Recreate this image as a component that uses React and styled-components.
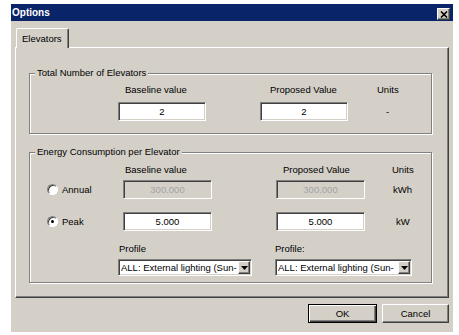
import styled, { createGlobalStyle } from 'styled-components'

const GlobalStyle = createGlobalStyle`
  html, body {
    margin: 0;
    padding: 0;
    background: #fff;
  }
  body {
    font-family: "Liberation Sans", Arial, sans-serif;
    font-size: 9.5px;
    color: #000;
  }
`

const Page = styled.div`
  padding: 4px 0 0 11px;
`

const Window = styled.div`
  width: 442px;
  height: 328px;
  background: #d4d0c8;
  display: flex;
  flex-direction: column;
`

const TitleBar = styled.div`
  height: 17px;
  flex: none;
  display: flex;
  align-items: center;
  justify-content: space-between;
  padding: 0 3px 0 1px;
  background: #0a246a;
  color: #fff;
  font-size: 10px;
  font-weight: bold;
`

const CloseButton = styled.div`
  width: 13px;
  height: 12px;
  margin-top: 3px;
  box-sizing: border-box;
  display: flex;
  align-items: center;
  justify-content: center;
  background: #d4d0c8;
  border: 1px solid;
  border-color: #fff #404040 #404040 #fff;
  box-shadow: inset -1px -1px 0 #808080;
`

const Body = styled.div`
  flex: 1;
  display: flex;
  flex-direction: column;
  padding: 7px 4px 0 4px;
`

const TabStrip = styled.div`
  display: flex;
  height: 19px;
  padding-left: 1px;
`

const Tab = styled.div`
  position: relative;
  z-index: 1;
  height: 20px;
  box-sizing: border-box;
  padding: 4px 6px 0 5px;
  background: #d4d0c8;
  border-top: 1px solid #fff;
  border-left: 1px solid #fff;
  border-right: 1px solid #404040;
  box-shadow: inset -1px 0 0 #808080;
  border-radius: 2px 2px 0 0;
  line-height: 12px;
`

const TabPanel = styled.div`
  height: 251px;
  box-sizing: border-box;
  border: 1px solid;
  border-color: #fff #404040 #404040 #fff;
  box-shadow: inset -1px -1px 0 #808080;
  padding: 25px 16px 0 13px;
  display: flex;
  flex-direction: column;
`

const Group = styled.div`
  border: 1px solid #808080;
  box-shadow: inset 1px 1px 0 #fff, 1px 1px 0 #fff;
  margin-top: ${({ $mt }) => $mt || 0}px;
  padding-bottom: ${({ $pb }) => $pb}px;
  display: flex;
  flex-direction: column;
`

const Caption = styled.div`
  align-self: flex-start;
  margin: -7px 0 0 5px;
  padding: 0 2px;
  background: #d4d0c8;
  line-height: 12px;
  white-space: nowrap;
`

const Row = styled.div`
  display: grid;
  grid-template-columns: ${({ $cols }) => $cols};
  align-items: center;
  height: ${({ $h }) => $h}px;
  margin-top: ${({ $mt }) => $mt || 0}px;
`

const Label = styled.span`
  grid-column: ${({ $col }) => $col};
  padding-left: ${({ $indent }) => $indent || 0}px;
  line-height: 12px;
  white-space: nowrap;
`

const Field = styled.input`
  grid-column: ${({ $col }) => $col};
  width: 100%;
  height: 19px;
  box-sizing: border-box;
  margin: 0;
  padding: 0;
  font: inherit;
  text-align: center;
  color: ${({ disabled }) => (disabled ? '#a3a3a3' : '#000')};
  background: ${({ disabled }) => (disabled ? '#d4d0c8' : '#fff')};
  border: 1px solid;
  border-color: #808080 #fff #fff #808080;
  box-shadow: inset 1px 1px 0 #404040, inset -1px -1px 0 #d4d0c8;
  outline: none;
`

const RadioOption = styled.label`
  grid-column: 1;
  display: flex;
  align-items: center;
  gap: 4px;
  padding-left: 17px;
  line-height: 12px;
`

const RadioDot = styled.span`
  position: relative;
  width: 11px;
  height: 11px;
  box-sizing: border-box;
  border-radius: 50%;
  background: #fff;
  border: 1px solid;
  border-color: #808080 #fff #fff #808080;
  box-shadow: inset 1px 1px 0 #404040;

  &::after {
    content: '';
    display: ${({ $checked }) => ($checked ? 'block' : 'none')};
    position: absolute;
    left: 3px;
    top: 3px;
    width: 3px;
    height: 3px;
    border-radius: 50%;
    background: #000;
  }
`

const ProfileRow = styled.div`
  display: flex;
  gap: 23px;
  padding-left: 88px;
  margin-top: 12px;
`

const ProfileCol = styled.div`
  width: ${({ $w }) => $w}px;
  display: flex;
  flex-direction: column;
  gap: 4px;
`

const ProfileLabel = styled.span`
  padding-left: ${({ $indent }) => $indent || 0}px;
  line-height: 12px;
`

const SelectBox = styled.div`
  height: 17px;
  box-sizing: border-box;
  display: flex;
  align-items: center;
  background: #fff;
  border: 1px solid;
  border-color: #808080 #fff #fff #808080;
  box-shadow: inset 1px 1px 0 #404040, inset -1px -1px 0 #d4d0c8;
  padding: 1px 1px 1px 2px;
`

const SelectText = styled.span`
  flex: 1;
  overflow: hidden;
  white-space: nowrap;
  line-height: 13px;
`

const DropButton = styled.span`
  width: 12px;
  height: 13px;
  flex: none;
  box-sizing: border-box;
  display: flex;
  align-items: center;
  justify-content: center;
  background: #d4d0c8;
  border: 1px solid;
  border-color: #fff #404040 #404040 #fff;
  box-shadow: inset -1px -1px 0 #808080;
`

const ButtonRow = styled.div`
  display: flex;
  justify-content: flex-end;
  gap: 5px;
  margin-top: 6px;
`

const Button = styled.div`
  width: ${({ $w }) => $w}px;
  height: 19px;
  box-sizing: border-box;
  display: flex;
  align-items: center;
  justify-content: center;
  border: 1px solid;
  border-color: ${({ $default }) => ($default ? '#000' : '#fff #404040 #404040 #fff')};
  box-shadow: ${({ $default }) =>
    $default
      ? 'inset 1px 1px 0 #fff, inset -1px -1px 0 #404040, inset -2px -2px 0 #808080'
      : 'inset -1px -1px 0 #808080'};
`

const Arrow = () => (
  <svg width="7" height="4" viewBox="0 0 7 4">
    <path d="M0 0h7L3.5 4z" fill="#000" />
  </svg>
)

const Select = ({ text }) => (
  <SelectBox>
    <SelectText>{text}</SelectText>
    <DropButton>
      <Arrow />
    </DropButton>
  </SelectBox>
)

const COLS_TOTAL = '88px 88px 54px 88px 1fr'
const COLS_ENERGY = '93px 89px 64px 89px 1fr'

const App = () => (
  <>
    <GlobalStyle />
    <Page>
      <Window>
        <TitleBar>
          <span>Options</span>
          <CloseButton>
            <svg width="8" height="7" viewBox="0 0 8 7">
              <path d="M1 0.5l6 6M7 0.5l-6 6" stroke="#000" strokeWidth="1.6" />
            </svg>
          </CloseButton>
        </TitleBar>

        <Body>
          <TabStrip>
            <Tab>Elevators</Tab>
          </TabStrip>

          <TabPanel>
            <Group $pb={12}>
              <Caption>Total Number of Elevators</Caption>
              <Row $cols={COLS_TOTAL} $h={12} $mt={5}>
                <Label $col={2} $indent={7}>Baseline value</Label>
                <Label $col={4} $indent={10}>Proposed Value</Label>
                <Label $col={5} $indent={29}>Units</Label>
              </Row>
              <Row $cols={COLS_TOTAL} $h={19} $mt={6}>
                <Field $col={2} readOnly value="2" />
                <Field $col={4} readOnly value="2" />
                <Label $col={5} $indent={38}>-</Label>
              </Row>
            </Group>

            <Group $mt={18} $pb={6}>
              <Caption>Energy Consumption per Elevator</Caption>
              <Row $cols={COLS_ENERGY} $h={12} $mt={6}>
                <Label $col={2} $indent={2}>Baseline value</Label>
                <Label $col={4} $indent={7}>Proposed Value</Label>
                <Label $col={5} $indent={27}>Units</Label>
              </Row>
              <Row $cols={COLS_ENERGY} $h={19} $mt={4}>
                <RadioOption>
                  <RadioDot />
                  Annual
                </RadioOption>
                <Field $col={2} disabled value="300.000" />
                <Field $col={4} disabled value="300.000" />
                <Label $col={5} $indent={28}>kWh</Label>
              </Row>
              <Row $cols={COLS_ENERGY} $h={19} $mt={13}>
                <RadioOption>
                  <RadioDot $checked />
                  Peak
                </RadioOption>
                <Field $col={2} readOnly value="5.000" />
                <Field $col={4} readOnly value="5.000" />
                <Label $col={5} $indent={31}>kW</Label>
              </Row>
              <ProfileRow>
                <ProfileCol $w={134}>
                  <ProfileLabel $indent={1}>Profile</ProfileLabel>
                  <Select text="ALL: External lighting (Sun-" />
                </ProfileCol>
                <ProfileCol $w={137}>
                  <ProfileLabel>Profile:</ProfileLabel>
                  <Select text="ALL: External lighting (Sun-" />
                </ProfileCol>
              </ProfileRow>
            </Group>
          </TabPanel>

          <ButtonRow>
            <Button $default $w={69}>OK</Button>
            <Button $w={67}>Cancel</Button>
          </ButtonRow>
        </Body>
      </Window>
    </Page>
  </>
)

export default App
